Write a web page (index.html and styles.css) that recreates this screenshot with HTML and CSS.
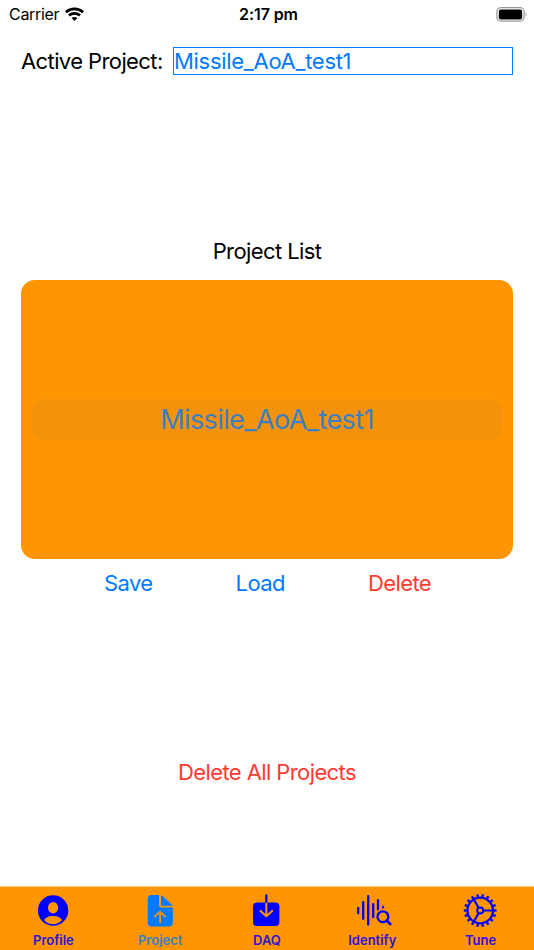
FILE: index.html
```html
<!DOCTYPE html>
<html lang="en">
<head>
    <meta charset="UTF-8">
    <meta name="viewport" content="width=device-width, initial-scale=1.0">
    <title>Project</title>
    <link rel="stylesheet" href="styles.css">
</head>
<body>
    <div class="status-bar">
        <div class="carrier">
            <span class="carrier-name">Carrier</span>
            <svg width="19" height="15" viewBox="0 0 20 15" fill="none" stroke="#000" stroke-width="2.9">
                <path d="M1 5.2C6 0.5 14 0.5 19 5.2"/>
                <path d="M4.2 8.6C7.5 5.6 12.5 5.6 15.8 8.6"/>
                <path d="M10 14.4L6.9 11.3C8.6 9.7 11.4 9.7 13.1 11.3Z" fill="#000" stroke="none"/>
            </svg>
        </div>
        <span class="time">2:17 pm</span>
        <svg class="battery" width="32" height="15" viewBox="0 0 32 15">
            <rect x="0.9" y="0.7" width="27.2" height="13.4" rx="4" fill="none" stroke="#999" stroke-width="1.2"/>
            <rect x="2.8" y="2.6" width="23.4" height="9.8" rx="2.2"/>
            <path d="M29.6 5.2Q31.6 7.4 29.6 9.6Z" fill="#999"/>
        </svg>
    </div>

    <div class="content">
        <div class="active-project">
            <label for="project">Active Project:</label>
            <input type="text" id="project" value="Missile_AoA_test1">
        </div>

        <h1 class="list-title">Project List</h1>
        <div class="picker">
            <div class="picker-item"><span>Missile_AoA_test1</span></div>
        </div>

        <div class="actions">
            <button class="save">Save</button>
            <button class="load">Load</button>
            <button class="delete">Delete</button>
        </div>
        <button class="delete-all">Delete All Projects</button>
    </div>

    <div class="tab-bar">
        <div class="tab">
            <svg width="36" height="34" viewBox="0 0 36 34">
                <circle cx="18.1" cy="16.5" r="15.2" fill="currentColor"/>
                <ellipse cx="18.1" cy="13.7" rx="5.1" ry="5.8" fill="#ff9500"/>
                <path d="M9.2 26.2C11.3 20.6 24.9 20.6 27 26.2C22.3 31.5 13.9 31.5 9.2 26.2Z" fill="#ff9500"/>
            </svg>
            <span class="tab-name">Profile</span>
        </div>
        <div class="tab selected">
            <svg width="36" height="34" viewBox="0 0 36 34">
                <path d="M9.6 1H17V11.2Q17 13.4 19.2 13.4H30.8V28.7Q30.8 32.5 27 32.5H9.6Q5.8 32.5 5.8 28.7V4.8Q5.8 1 9.6 1Z" fill="currentColor"/>
                <path d="M19.1 1.2Q20 1.5 20.8 2.3L29.5 10.2Q30.3 11 30.5 11.8H19.8Q19.1 11.8 19.1 11.1Z" fill="currentColor"/>
                <path d="M18.1 28.5V18M12.9 22.7L18.1 17.7L23.3 22.7" fill="none" stroke="#ff9500" stroke-width="1.7" stroke-linecap="round" stroke-linejoin="round"/>
            </svg>
            <span class="tab-name">Project</span>
        </div>
        <div class="tab">
            <svg width="36" height="34" viewBox="0 0 36 34" fill="none" stroke-width="2" stroke-linecap="round" stroke-linejoin="round">
                <rect x="4" y="8.5" width="26.4" height="23.6" rx="4" fill="currentColor"/>
                <path d="M17.3 8.5V22M11.5 16.9L17.3 22.2L23.1 16.9" stroke="#ff9500"/>
                <path d="M17.3 1.5V8" stroke="currentColor" stroke-width="2.3"/>
            </svg>
            <span class="tab-name">DAQ</span>
        </div>
        <div class="tab">
            <svg width="36" height="34" viewBox="0 0 36 34" fill="none" stroke="currentColor" stroke-width="2.3" stroke-linecap="round">
                <path d="M2.2 13.8V19.2M7.2 8.2V24.8M12.2 2.2V30.6M17.2 10.2V23.2M22 6.2V15.5M27 12.8V13.6"/>
                <circle cx="26.9" cy="22.7" r="5.4"/>
                <path d="M31 26.8L34.3 30.1" stroke-width="2.7"/>
            </svg>
            <span class="tab-name identify">Identify</span>
        </div>
        <div class="tab">
            <svg width="36" height="34" viewBox="0 0 36 34" fill="none" stroke="currentColor" stroke-width="2.1">
                <circle cx="17.2" cy="16.5" r="12.8" stroke-width="2.3"/>
                <!-- 18 teeth -->
                <circle cx="17.2" cy="16.5" r="15" stroke-width="2.8" pathLength="360" stroke-dasharray="9 11" stroke-dashoffset="4.5"/>
                <circle cx="17.2" cy="16.5" r="3"/>
                <path d="M20.2 16.5H29.5M15.7 13.9L11 5.8M15.7 19.1L11 27.2"/>
            </svg>
            <span class="tab-name">Tune</span>
        </div>
    </div>
</body>
</html>
```
FILE: styles.css
```css
* {
    box-sizing: border-box;
}

body {
    margin: 0;
    height: 950px;
    display: flex;
    flex-direction: column;
    overflow: hidden;
    font-family: Inter, sans-serif;
    font-size: 22px;
    line-height: 28px;
    letter-spacing: -0.6px;
    color: #000;
    background-color: #fff;
}

.status-bar {
    display: grid;
    grid-template-columns: 1fr auto 1fr;
    align-items: center;
    height: 27px;
    padding: 0 6px 0 9px;
    font-size: 16px;
    letter-spacing: -0.3px;
}

.carrier {
    display: flex;
    align-items: center;
    gap: 6px;
}

.time {
    font-weight: 600;
    letter-spacing: -0.1px;
}

.battery {
    justify-self: end;
}

.content {
    flex: 1;
    display: flex;
    flex-direction: column;
    padding: 20px 21px 0;
}

.active-project {
    display: flex;
    gap: 11px;
    height: 28px;
    align-items: center;
}

label {
    width: 141px;
    white-space: nowrap;
}

input {
    flex: 1;
    min-width: 0;
    height: 28px;
    padding: 0;
    border: 1.4px solid #007aff;
    border-radius: 0;
    font: inherit;
    letter-spacing: -0.3px;
    color: #007aff;
    outline: none;
}

.list-title {
    margin: 162px 0 15px;
    font-size: 22px;
    font-weight: 400;
    text-align: center;
}

.picker {
    display: flex;
    align-items: center;
    height: 279px;
    padding: 0 11px;
    border-radius: 14px;
    background-color: #ff9500;
}

.picker-item {
    flex: 1;
    height: 41px;
    border-radius: 11px;
    background-color: #f4920b;
    color: #3a80c2;
    font-size: 27px;
    line-height: 41px;
    text-align: center;
}

button {
    padding: 0;
    border: none;
    background: none;
    font: inherit;
    letter-spacing: inherit;
    color: #007aff;
}

.actions {
    display: flex;
    justify-content: space-between;
    margin-top: 10px;
    padding: 0 82px 0 83px;
}

.delete,
.delete-all {
    color: #ff3b30;
}

.delete-all {
    margin-top: 161px;
}

.tab-bar {
    display: flex;
    height: 64px;
    padding-top: 7px;
    border-top: 1px solid #ffcb85;
    background-color: #ff9500;
}

.tab {
    flex: 1;
    display: flex;
    flex-direction: column;
    align-items: center;
    color: #00f;
}

.tab-name {
    margin-top: 4px;
    font-size: 13px;
    font-weight: 600;
    line-height: 16px;
    letter-spacing: 0;
    color: #3010dc;
}

.identify {
    margin-right: 3px;
}

.selected {
    color: #007aff;
}

.selected .tab-name {
    color: #3c81bc;
}
```
